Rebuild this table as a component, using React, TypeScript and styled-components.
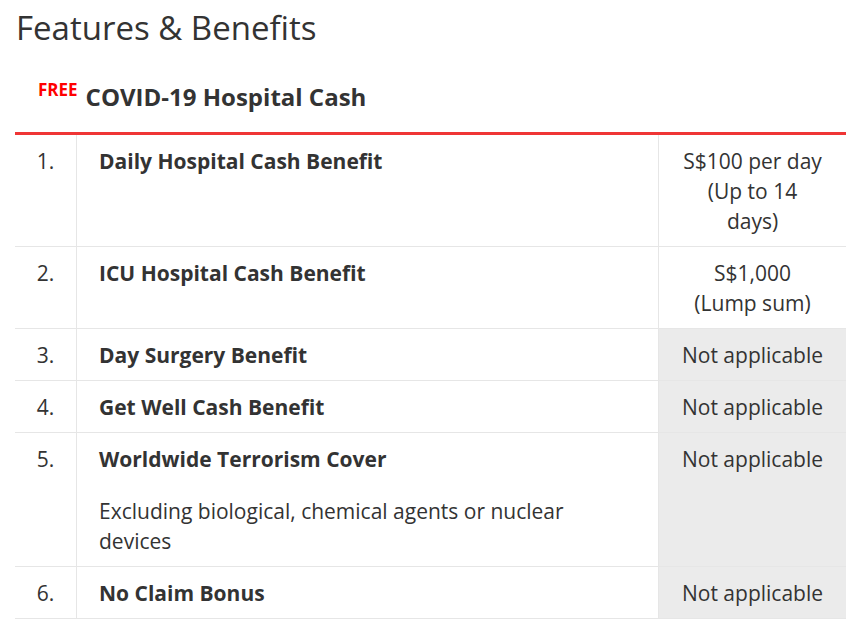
import React from 'react';
import styled, {createGlobalStyle} from 'styled-components';

const GlobalStyle = createGlobalStyle`
  body {
    margin: 0;
    background: #fff;
    font-family: "Open Sans", "Noto Sans", sans-serif;
    color: #333;
  }
`;

const Page = styled.div`
  padding: 7px 14px 0 15px;
`;

const Title = styled.h2`
  margin: 0 0 0 1px;
  font-size: 33px;
  font-weight: 500;
  line-height: 42px;
  color: #333;
`;

const PlanHeading = styled.div`
  padding: 33px 23px 20px;
  border-bottom: 3px solid #ef3535;
  font-size: 24px;
  font-weight: 700;
  line-height: 30px;
  > sup {
    color: #f00;
    font-size: 17px;
    line-height: 0;
    margin-right: 8px;
    vertical-align: 10px;
  }
`;

const Table = styled.table`
  width: 100%;
  border-collapse: collapse;
  font-size: 21px;
  line-height: 30px;
`;

const Row = styled.tr`
  border-bottom: 1px solid #e6e6e6;
`;

const Num = styled.td`
  width: 61px;
  padding: 11px 0 10px;
  text-align: center;
  vertical-align: top;
  border-right: 1px solid #e6e6e6;
`;

const Benefit = styled.td`
  padding: 11px 22px 10px;
  vertical-align: top;
  border-right: 1px solid #e6e6e6;
  > b {
    display: block;
  }
  > p {
    margin: 22px 0 0;
  }
`;

const Value = styled.td<{$na?: boolean}>`
  width: 143px;
  padding: 11px 22px 10px;
  text-align: center;
  vertical-align: top;
  background: ${p => (p.$na ? '#ebebeb' : '#fff')};
`;

type Item = {title: string; note?: string; value: string[]};

const items: Item[] = [
  {title: 'Daily Hospital Cash Benefit', value: ['S$100 per day (Up to 14 days)']},
  {title: 'ICU Hospital Cash Benefit', value: ['S$1,000', '(Lump sum)']},
  {title: 'Day Surgery Benefit', value: []},
  {title: 'Get Well Cash Benefit', value: []},
  {
    title: 'Worldwide Terrorism Cover',
    note: 'Excluding biological, chemical agents or nuclear devices',
    value: []
  },
  {title: 'No Claim Bonus', value: []}
];

export default function App() {
  return (
    <Page>
      <GlobalStyle/>
      <Title>Features &amp; Benefits</Title>
      <PlanHeading><sup>FREE</sup>COVID-19 Hospital Cash</PlanHeading>
      <Table>
        <tbody>
          {items.map((it, i) => {
            const na = it.value.length === 0;
            return (
              <Row key={it.title}>
                <Num>{i + 1}.</Num>
                <Benefit>
                  <b>{it.title}</b>
                  {it.note && <p>{it.note}</p>}
                </Benefit>
                <Value $na={na}>
                  {na ? 'Not applicable' : it.value.map((v, j) => <div key={j}>{v}</div>)}
                </Value>
              </Row>
            );
          })}
        </tbody>
      </Table>
    </Page>
  );
}
